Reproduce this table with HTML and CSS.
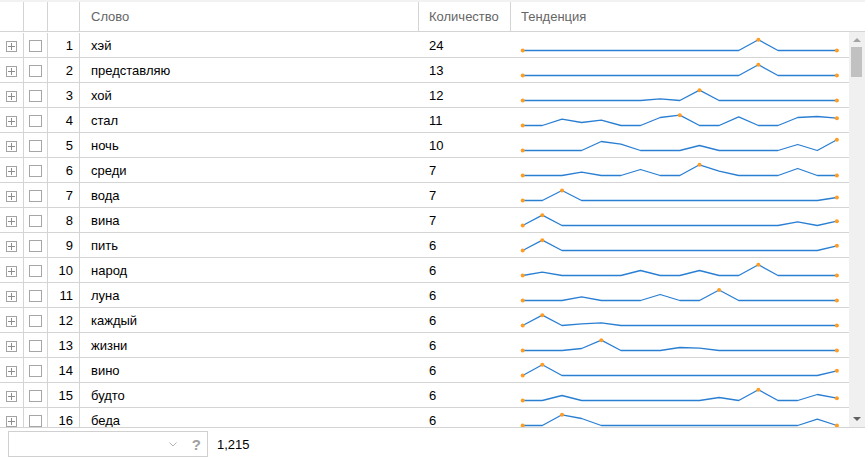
FILE: index.html
```html
<!DOCTYPE html>
<html lang="ru">
<head>
    <meta charset="UTF-8">
    <title>Частота слов</title>
    <link rel="stylesheet" href="styles.css">
</head>
<body>

    <div class="grid">
        <div class="head">
            <div class="c c-exp"></div>
            <div class="c c-chk"></div>
            <div class="c c-num"></div>
            <div class="c c-word">Слово</div>
            <div class="c c-cnt">Количество</div>
            <div class="c c-trend">Тенденция</div>
        </div>

        <div class="body">
            <div class="rows">
                <div class="row">
                    <div class="c c-exp"><span class="expander"></span></div>
                    <div class="c c-chk"><span class="checkbox"></span></div>
                    <div class="c c-num">1</div>
                    <div class="c c-word">хэй</div>
                    <div class="c c-cnt">24</div>
                    <div class="c c-trend">
                        <svg class="spark" width="338" height="24">
                            <polyline points="11.7,17.5 227.7,17.5 247.4,6.8 267,17.5 325.9,17.5"/>
                            <circle cx="11.7" cy="17.5" r="2"/><circle cx="247.4" cy="6.8" r="2"/><circle cx="325.9" cy="17.5" r="2"/>
                        </svg>
                    </div>
                </div>
                <div class="row">
                    <div class="c c-exp"><span class="expander"></span></div>
                    <div class="c c-chk"><span class="checkbox"></span></div>
                    <div class="c c-num">2</div>
                    <div class="c c-word">представляю</div>
                    <div class="c c-cnt">13</div>
                    <div class="c c-trend">
                        <svg class="spark" width="338" height="24">
                            <polyline points="11.7,17.5 227.7,17.5 247.4,6.8 267,17.5 325.9,17.5"/>
                            <circle cx="11.7" cy="17.5" r="2"/><circle cx="247.4" cy="6.8" r="2"/><circle cx="325.9" cy="17.5" r="2"/>
                        </svg>
                    </div>
                </div>
                <div class="row">
                    <div class="c c-exp"><span class="expander"></span></div>
                    <div class="c c-chk"><span class="checkbox"></span></div>
                    <div class="c c-num">3</div>
                    <div class="c c-word">хой</div>
                    <div class="c c-cnt">12</div>
                    <div class="c c-trend">
                        <svg class="spark" width="338" height="24">
                            <polyline points="11.7,17.5 129.5,17.5 149.2,15.8 168.8,17.5 188.5,7.2 208.1,17.5 325.9,17.5"/>
                            <circle cx="11.7" cy="17.5" r="2"/><circle cx="188.5" cy="7.2" r="2"/><circle cx="325.9" cy="17.5" r="2"/>
                        </svg>
                    </div>
                </div>
                <div class="row">
                    <div class="c c-exp"><span class="expander"></span></div>
                    <div class="c c-chk"><span class="checkbox"></span></div>
                    <div class="c c-num">4</div>
                    <div class="c c-word">стал</div>
                    <div class="c c-cnt">11</div>
                    <div class="c c-trend">
                        <svg class="spark" width="338" height="24">
                            <polyline points="11.7,17.5 31.3,17.5 51,11.2 70.6,14.5 90.3,12.2 109.9,17.5 129.5,17.5 149.2,9.5 168.8,7.2 188.5,17.5 208.1,17.5 227.7,8.8 247.4,17.5 267,17.5 286.7,9.5 306.3,8.5 325.9,10.2"/>
                            <circle cx="11.7" cy="17.5" r="2"/><circle cx="168.8" cy="7.2" r="2"/><circle cx="325.9" cy="10.2" r="2"/>
                        </svg>
                    </div>
                </div>
                <div class="row">
                    <div class="c c-exp"><span class="expander"></span></div>
                    <div class="c c-chk"><span class="checkbox"></span></div>
                    <div class="c c-num">5</div>
                    <div class="c c-word">ночь</div>
                    <div class="c c-cnt">10</div>
                    <div class="c c-trend">
                        <svg class="spark" width="338" height="24">
                            <polyline points="11.7,17.5 70.6,17.5 90.3,8.5 109.9,11.2 129.5,17.5 168.8,17.5 188.5,12.5 208.1,17.5 267,17.5 286.7,11.5 306.3,17.5 325.9,6.8"/>
                            <circle cx="11.7" cy="17.5" r="2"/><circle cx="325.9" cy="6.8" r="2"/>
                        </svg>
                    </div>
                </div>
                <div class="row">
                    <div class="c c-exp"><span class="expander"></span></div>
                    <div class="c c-chk"><span class="checkbox"></span></div>
                    <div class="c c-num">6</div>
                    <div class="c c-word">среди</div>
                    <div class="c c-cnt">7</div>
                    <div class="c c-trend">
                        <svg class="spark" width="338" height="24">
                            <polyline points="11.7,17.5 51,17.5 70.6,14.2 90.3,17.5 109.9,17.5 129.5,11.5 149.2,17.5 168.8,17.5 188.5,6.8 208.1,13.2 227.7,17.5 267,17.5 286.7,10.5 306.3,17.5 325.9,17.5"/>
                            <circle cx="11.7" cy="17.5" r="2"/><circle cx="188.5" cy="6.8" r="2"/><circle cx="325.9" cy="17.5" r="2"/>
                        </svg>
                    </div>
                </div>
                <div class="row">
                    <div class="c c-exp"><span class="expander"></span></div>
                    <div class="c c-chk"><span class="checkbox"></span></div>
                    <div class="c c-num">7</div>
                    <div class="c c-word">вода</div>
                    <div class="c c-cnt">7</div>
                    <div class="c c-trend">
                        <svg class="spark" width="338" height="24">
                            <polyline points="11.7,17.5 31.3,17.5 51,7.5 70.6,17.5 306.3,17.5 325.9,14.5"/>
                            <circle cx="11.7" cy="17.5" r="2"/><circle cx="51" cy="7.5" r="2"/><circle cx="325.9" cy="14.5" r="2"/>
                        </svg>
                    </div>
                </div>
                <div class="row">
                    <div class="c c-exp"><span class="expander"></span></div>
                    <div class="c c-chk"><span class="checkbox"></span></div>
                    <div class="c c-num">8</div>
                    <div class="c c-word">вина</div>
                    <div class="c c-cnt">7</div>
                    <div class="c c-trend">
                        <svg class="spark" width="338" height="24">
                            <polyline points="11.7,17.5 31.3,7.2 51,17.5 267,17.5 286.7,13.8 306.3,17.5 325.9,13.2"/>
                            <circle cx="11.7" cy="17.5" r="2"/><circle cx="31.3" cy="7.2" r="2"/><circle cx="325.9" cy="13.2" r="2"/>
                        </svg>
                    </div>
                </div>
                <div class="row">
                    <div class="c c-exp"><span class="expander"></span></div>
                    <div class="c c-chk"><span class="checkbox"></span></div>
                    <div class="c c-num">9</div>
                    <div class="c c-word">пить</div>
                    <div class="c c-cnt">6</div>
                    <div class="c c-trend">
                        <svg class="spark" width="338" height="24">
                            <polyline points="11.7,17.5 31.3,7.2 51,17.5 306.3,17.5 325.9,12.8"/>
                            <circle cx="11.7" cy="17.5" r="2"/><circle cx="31.3" cy="7.2" r="2"/><circle cx="325.9" cy="12.8" r="2"/>
                        </svg>
                    </div>
                </div>
                <div class="row">
                    <div class="c c-exp"><span class="expander"></span></div>
                    <div class="c c-chk"><span class="checkbox"></span></div>
                    <div class="c c-num">10</div>
                    <div class="c c-word">народ</div>
                    <div class="c c-cnt">6</div>
                    <div class="c c-trend">
                        <svg class="spark" width="338" height="24">
                            <polyline points="11.7,17.5 31.3,14.2 51,17.5 109.9,17.5 129.5,12.5 149.2,17.5 168.8,17.5 188.5,12.5 208.1,17.5 227.7,17.5 247.4,6.8 267,17.5 325.9,17.5"/>
                            <circle cx="11.7" cy="17.5" r="2"/><circle cx="247.4" cy="6.8" r="2"/><circle cx="325.9" cy="17.5" r="2"/>
                        </svg>
                    </div>
                </div>
                <div class="row">
                    <div class="c c-exp"><span class="expander"></span></div>
                    <div class="c c-chk"><span class="checkbox"></span></div>
                    <div class="c c-num">11</div>
                    <div class="c c-word">луна</div>
                    <div class="c c-cnt">6</div>
                    <div class="c c-trend">
                        <svg class="spark" width="338" height="24">
                            <polyline points="11.7,17.5 51,17.5 70.6,13.8 90.3,17.5 129.5,17.5 149.2,11.5 168.8,17.5 188.5,17.5 208.1,7 227.7,17.5 325.9,17.5"/>
                            <circle cx="11.7" cy="17.5" r="2"/><circle cx="208.1" cy="7" r="2"/><circle cx="325.9" cy="17.5" r="2"/>
                        </svg>
                    </div>
                </div>
                <div class="row">
                    <div class="c c-exp"><span class="expander"></span></div>
                    <div class="c c-chk"><span class="checkbox"></span></div>
                    <div class="c c-num">12</div>
                    <div class="c c-word">каждый</div>
                    <div class="c c-cnt">6</div>
                    <div class="c c-trend">
                        <svg class="spark" width="338" height="24">
                            <polyline points="11.7,17.5 31.3,7.2 51,17.5 70.6,15.8 90.3,14.8 109.9,17.5 325.9,17.5"/>
                            <circle cx="11.7" cy="17.5" r="2"/><circle cx="31.3" cy="7.2" r="2"/><circle cx="325.9" cy="17.5" r="2"/>
                        </svg>
                    </div>
                </div>
                <div class="row">
                    <div class="c c-exp"><span class="expander"></span></div>
                    <div class="c c-chk"><span class="checkbox"></span></div>
                    <div class="c c-num">13</div>
                    <div class="c c-word">жизни</div>
                    <div class="c c-cnt">6</div>
                    <div class="c c-trend">
                        <svg class="spark" width="338" height="24">
                            <polyline points="11.7,17.5 51,17.5 70.6,15.5 90.3,7.2 109.9,17.5 149.2,17.5 168.8,14.5 188.5,15.2 208.1,17.5 325.9,17.5"/>
                            <circle cx="11.7" cy="17.5" r="2"/><circle cx="90.3" cy="7.2" r="2"/><circle cx="325.9" cy="17.5" r="2"/>
                        </svg>
                    </div>
                </div>
                <div class="row">
                    <div class="c c-exp"><span class="expander"></span></div>
                    <div class="c c-chk"><span class="checkbox"></span></div>
                    <div class="c c-num">14</div>
                    <div class="c c-word">вино</div>
                    <div class="c c-cnt">6</div>
                    <div class="c c-trend">
                        <svg class="spark" width="338" height="24">
                            <polyline points="11.7,17.5 31.3,6.8 51,17.5 306.3,17.5 325.9,12.8"/>
                            <circle cx="11.7" cy="17.5" r="2"/><circle cx="31.3" cy="6.8" r="2"/><circle cx="325.9" cy="12.8" r="2"/>
                        </svg>
                    </div>
                </div>
                <div class="row">
                    <div class="c c-exp"><span class="expander"></span></div>
                    <div class="c c-chk"><span class="checkbox"></span></div>
                    <div class="c c-num">15</div>
                    <div class="c c-word">будто</div>
                    <div class="c c-cnt">6</div>
                    <div class="c c-trend">
                        <svg class="spark" width="338" height="24">
                            <polyline points="11.7,17.5 31.3,17.5 51,12.5 70.6,17.5 188.5,17.5 208.1,14.5 227.7,17.5 247.4,6.8 267,17.5 286.7,17.5 306.3,11.5 325.9,15.2"/>
                            <circle cx="11.7" cy="17.5" r="2"/><circle cx="247.4" cy="6.8" r="2"/><circle cx="325.9" cy="15.2" r="2"/>
                        </svg>
                    </div>
                </div>
                <div class="row">
                    <div class="c c-exp"><span class="expander"></span></div>
                    <div class="c c-chk"><span class="checkbox"></span></div>
                    <div class="c c-num">16</div>
                    <div class="c c-word">беда</div>
                    <div class="c c-cnt">6</div>
                    <div class="c c-trend">
                        <svg class="spark" width="338" height="24">
                            <polyline points="11.7,17.5 31.3,17.5 51,6.8 70.6,10.5 90.3,17.5 286.7,17.5 306.3,11.2 325.9,17.5"/>
                            <circle cx="11.7" cy="17.5" r="2"/><circle cx="51" cy="6.8" r="2"/><circle cx="325.9" cy="17.5" r="2"/>
                        </svg>
                    </div>
                </div>
            </div>

            <div class="vscroll">
                <span class="arrow-up"></span>
                <span class="thumb"></span>
                <span class="track"></span>
                <span class="arrow-down"></span>
            </div>
        </div>
    </div>

    <div class="footer">
        <div class="combo">
            <svg class="chevron" width="8" height="5"><polyline points="0.5,0.5 4,4 7.5,0.5"/></svg>
            <span class="help">?</span>
        </div>
        <span class="total">1,215</span>
    </div>

</body>
</html>
```

FILE: styles.css
```css
body {
    margin: 0;
    font-family: "Liberation Sans", Arial, sans-serif;
    font-size: 13px;
    color: #000;
    background-color: #fff;
}
.head {
    display: flex;
    height: 29px;
    line-height: 29px;
    border-top: 2px solid #f2f2f2;
    border-bottom: 1px solid #d4d4d4;
    color: #666;
}
.c {
    box-sizing: border-box;
    flex: none;
    border-right: 1px solid #d4d4d4;
    white-space: nowrap;
    overflow: hidden;
}
.c-exp {
    width: 24px;
}
.c-chk {
    width: 24px;
}
.c-num {
    width: 32px;
    text-align: right;
    padding-right: 6px;
}
.c-word {
    width: 339px;
    padding-left: 11px;
}
.c-cnt {
    width: 92px;
    padding-left: 10px;
}
.c-trend {
    flex: 1;
    padding-left: 10px;
    border-right: none;
}
.body {
    display: flex;
    height: 395px;
    border-bottom: 1px solid #d4d4d4;
    overflow: hidden;
}
.rows {
    flex: 1;
    padding-top: 1px;
    overflow: hidden;
}
.row {
    display: flex;
    height: 24px;
    line-height: 26px;
    border-bottom: 1px solid #d4d4d4;
}
.row .c-word,
.row .c-cnt {
    border-right: none;
}
.row .c-trend {
    padding-left: 0;
}
.row .c-exp,
.row .c-chk {
    display: flex;
    align-items: center;
}
.expander {
    position: relative;
    box-sizing: border-box;
    width: 11px;
    height: 11px;
    margin: 2px 0 0 6px;
    border: 1px solid #a3a3a3;
}
.expander::before,
.expander::after {
    content: "";
    position: absolute;
    background-color: #8c8c8c;
}
.expander::before {
    left: 1px;
    right: 1px;
    top: 4px;
    height: 1px;
}
.expander::after {
    top: 1px;
    bottom: 1px;
    left: 4px;
    width: 1px;
}
.checkbox {
    box-sizing: border-box;
    width: 13px;
    height: 12px;
    margin: 2px 0 0 5px;
    border: 1px solid #a6a6a6;
    background-color: #fff;
}
.spark {
    display: block;
}
.spark polyline {
    fill: none;
    stroke: #2a7fd3;
    stroke-width: 1.3;
    stroke-linejoin: round;
}
.spark circle {
    fill: #ff9d22;
}
.vscroll {
    width: 16px;
    flex: none;
    display: flex;
    flex-direction: column;
    align-items: center;
    background-color: #f0f0f0;
}
.arrow-up {
    margin-top: 6px;
    border-left: 4px solid transparent;
    border-right: 4px solid transparent;
    border-bottom: 4px solid #a3a3a3;
}
.thumb {
    margin-top: 5px;
    margin-left: -1px;
    width: 11px;
    height: 30px;
    background-color: #c1c1c1;
}
.track {
    flex: 1;
}
.arrow-down {
    margin-bottom: 6px;
    border-left: 4px solid transparent;
    border-right: 4px solid transparent;
    border-top: 4px solid #606060;
}
.footer {
    display: flex;
    align-items: center;
    height: 30px;
    padding: 0 8px;
}
.combo {
    box-sizing: border-box;
    display: flex;
    align-items: center;
    justify-content: flex-end;
    width: 200px;
    height: 26px;
    margin-top: 2px;
    border: 1px solid #d0d0d0;
    padding-right: 6px;
}
.chevron polyline {
    fill: none;
    stroke: #b4b4b4;
    stroke-width: 1;
}
.help {
    margin-left: 15px;
    font-size: 15px;
    font-weight: bold;
    color: #a0a0a0;
}
.total {
    margin-left: 9px;
    margin-top: 2px;
}
```
